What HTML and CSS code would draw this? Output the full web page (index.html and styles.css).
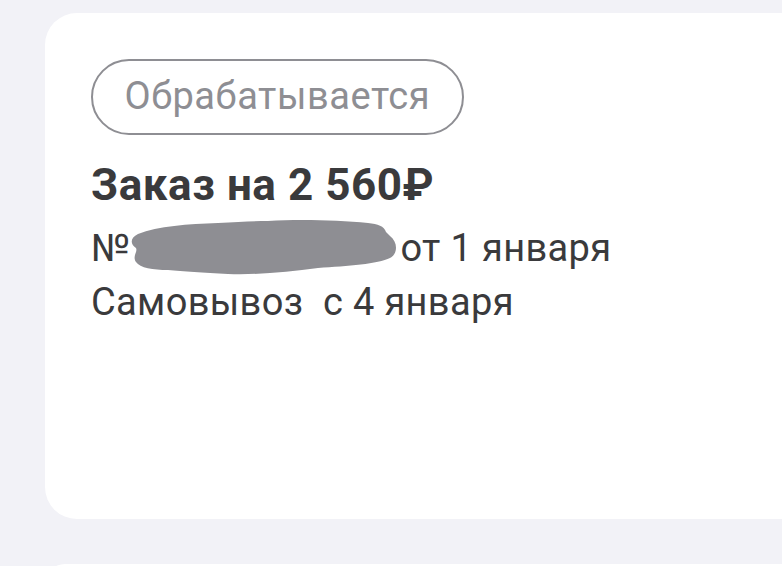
FILE: index.html
```html
<!DOCTYPE html>
<html lang="ru">
<head>
<meta charset="utf-8">
<link rel="stylesheet" href="styles.css">
</head>
<body>
<div class="page">
  <div class="card">
    <div class="status">Обрабатывается</div>
    <div class="title">Заказ на 2 560₽</div>
    <div class="line line-first">№<span class="hidden"><svg class="blob" width="272" height="60" viewBox="0 0 272 60"><path d="M10 16 C 30 8, 60 6, 90 5 C 110 4, 125 3, 140 3 C 170 1, 210 2, 240 5 C 250 6, 256 8, 258 14 L 262 18 C 270 24, 270 36, 262 40 C 250 46, 220 48, 190 50 C 160 54, 130 57, 100 56 C 75 55, 55 53, 40 52 C 25 52, 12 50, 8 44 C 4 38, 10 34, 8 30 C 2 26, 2 20, 10 16 Z" fill="#8e8e93"/></svg></span>от 1 января</div>
    <div class="line">Самовывоз&nbsp; с 4 января</div>
  </div>
  <div class="card2"></div>
</div>
</body>
</html>
```
FILE: styles.css
```css
html, body {
  margin: 0;
  padding: 0;
  background: #f2f2f7;
}
body {
  font-family: Roboto, "Noto Sans", sans-serif;
  width: 782px;
  height: 566px;
  overflow: hidden;
}
.page {
  padding-top: 13px;
  padding-left: 45px;
}
.card {
  background: #fff;
  border-radius: 32px 0 0 32px;
  height: 506px;
  box-sizing: border-box;
  padding: 46px 0 0 46px;
}
.status {
  display: inline-block;
  box-sizing: border-box;
  height: 76px;
  padding: 0 32px 0 31.5px;
  border: 2.5px solid #8e8e93;
  border-radius: 38px;
  color: #8e8e93;
  font-size: 38px;
  letter-spacing: 0.55px;
  line-height: 71px;
}
.title {
  margin-top: 24px;
  font-size: 44px;
  font-weight: 700;
  letter-spacing: 0.55px;
  color: #3a3a3c;
  line-height: 52px;
}
.line {
  font-size: 38px;
  letter-spacing: 0.35px;
  color: #3a3a3c;
  line-height: 54px;
}
.line-first {
  margin-top: 10px;
}
.hidden {
  display: inline-block;
  width: 270px;
  height: 40px;
  position: relative;
  vertical-align: -6px;
}
.blob {
  position: absolute;
  left: -2px;
  top: -9px;
}
.card2 {
  margin-top: 45px;
  height: 20px;
  background: #fff;
  border-radius: 24px 0 0 0;
}
```
